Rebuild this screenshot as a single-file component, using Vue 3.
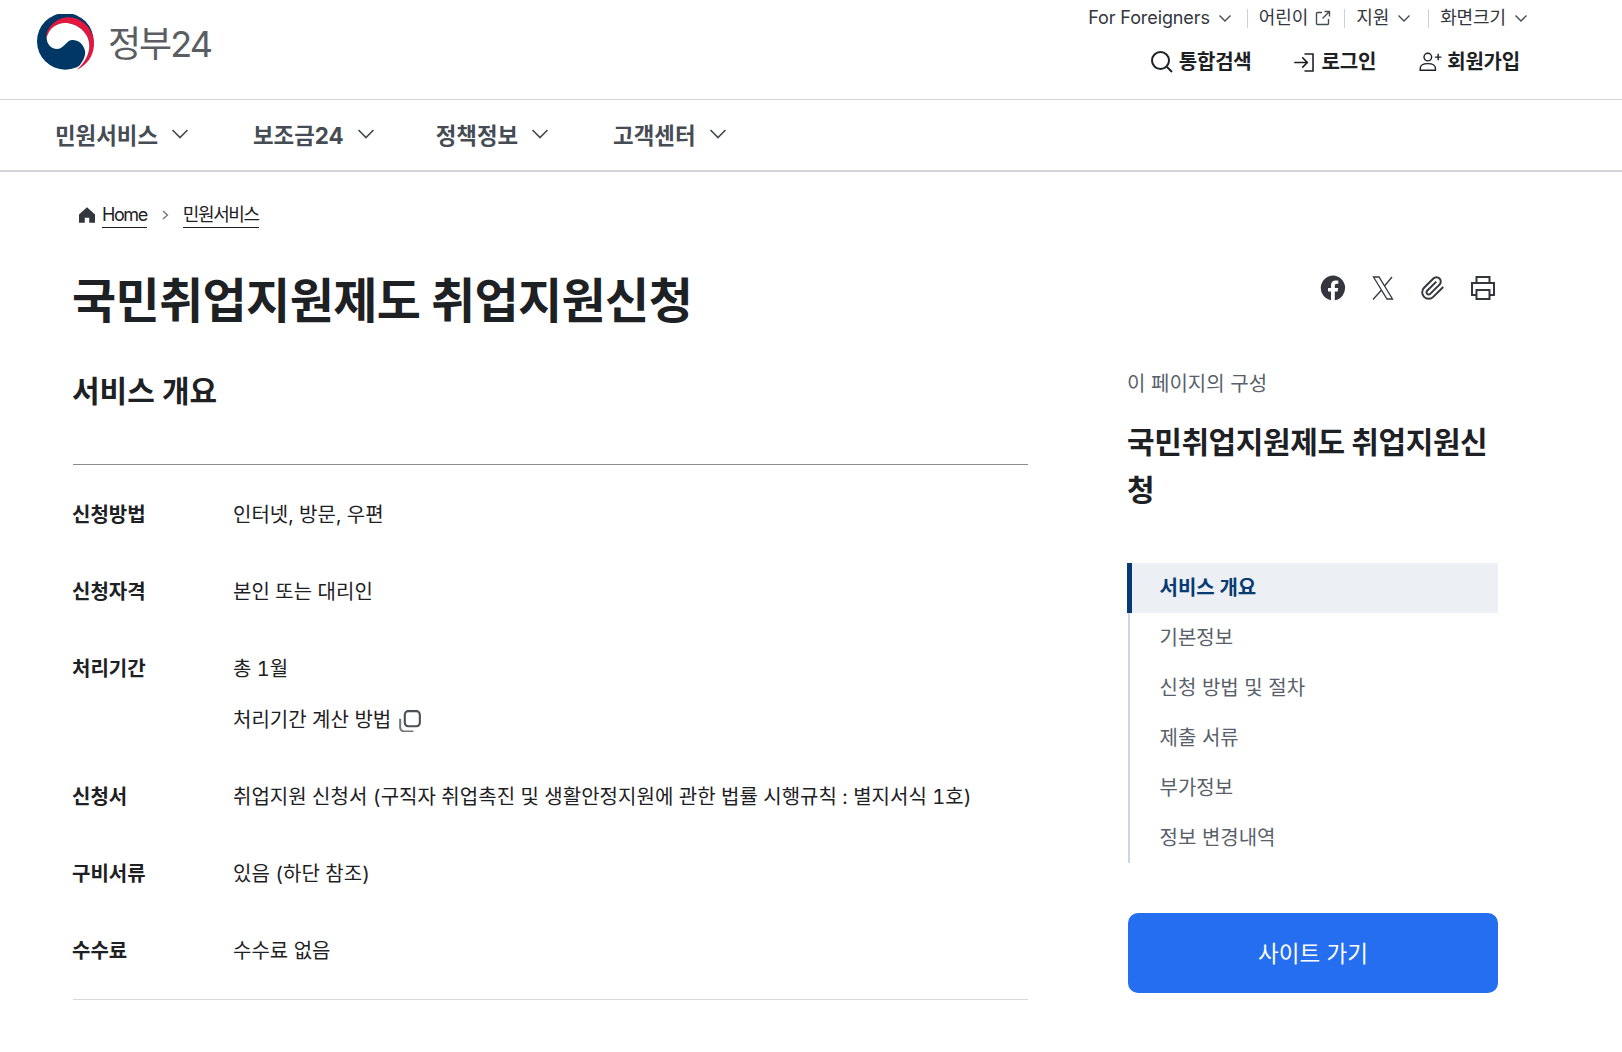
<script setup>
const gnb = ['민원서비스', '보조금24', '정책정보', '고객센터']
const toc = ['기본정보', '신청 방법 및 절차', '제출 서류', '부가정보', '정보 변경내역']
</script>

<template>
  <div class="page">
    <header class="header">
      <a class="logo">
        <svg width="60" height="57" viewBox="18 15 180 171">
          <circle cx="106" cy="97" r="85" fill="#003764" />
          <path d="M48 88C50 50 85 25 115 25C160 25 192 65 192 105C192 140 170 170 140 182C165 160 178 135 178 110C178 70 140 42 105 42C80 42 58 60 48 88Z" fill="#e4173e" />
          <path d="M50 85C58 58 80 42 105 42C140 42 178 70 178 110C178 135 165 160 142 180C155 160 168 145 165 125C160 105 145 93 128 93C108 93 105 118 82 120C62 120 50 105 50 85Z" fill="#fff" />
        </svg>
        <span class="logo-text">정부24</span>
      </a>
      <div class="header-right">
        <ul class="util">
          <li>For Foreigners <svg class="chev-s" viewBox="0 0 16 16"><path d="M2.500 5.500 8 11l5.500-5.500" /></svg></li>
          <li>어린이 <svg class="ext" viewBox="0 0 16 16"><path d="M7 2.500H2.500a1 1 0 0 0-1 1V13.500a1 1 0 0 0 1 1H12.500a1 1 0 0 0 1-1V9M9.500 1.500H14.500V6.500M14.500 1.500 7.500 8.500" /></svg></li>
          <li>지원 <svg class="chev-s" viewBox="0 0 16 16"><path d="M2.500 5.500 8 11l5.500-5.500" /></svg></li>
          <li>화면크기 <svg class="chev-s" viewBox="0 0 16 16"><path d="M2.500 5.500 8 11l5.500-5.500" /></svg></li>
        </ul>
        <div class="actions">
          <a class="act act-search">
            <svg width="24" height="24" viewBox="0 0 24 24" class="ic"><circle cx="10.500" cy="10.500" r="8.500" stroke-width="2" /><path d="m17 17 5 5" stroke-width="2" /></svg>
            통합검색
          </a>
          <a class="act act-login">
            <svg width="25" height="25" viewBox="0 0 22 22" class="ic"><path d="M11 3.500h7.500v15H11M2 11h11M9 6.500l4.500 4.500L9 15.500" stroke-width="1.400" /></svg>
            로그인
          </a>
          <a class="act act-join">
            <svg width="24" height="24" viewBox="0 0 22 22" class="ic"><circle cx="9" cy="6.500" r="3.500" stroke-width="1.300" /><path d="M2 18.500v-1.500c0-3 3-4.500 7-4.500s7 1.500 7 4.500v1.500ZM15.500 6.500h6M18.500 3.500v6" stroke-width="1.300" /></svg>
            회원가입
          </a>
        </div>
      </div>
    </header>

    <nav class="gnb">
      <a v-for="g in gnb" :key="g" class="gnb-item">
        {{ g }}
        <svg width="20" height="20" viewBox="0 0 20 20" class="ic"><path d="M2.500 6 10 13.500 17.500 6" stroke-width="1.700" /></svg>
      </a>
    </nav>

    <div class="crumbs">
      <svg width="16" height="16" viewBox="0.800 1 14.400 14"><path d="M8 1 .8 7.500V15H6v-4.500h4V15h5.200V7.500Z" fill="#33363d" /></svg>
      <a class="crumb">Home</a>
      <svg width="16" height="16" viewBox="0 0 16 16" class="ic"><path d="m6 4 4.500 4L6 12" stroke="#777" stroke-width="1.400" /></svg>
      <a class="crumb">민원서비스</a>
    </div>

    <div class="title-row">
      <h1 class="title">국민취업지원제도 취업지원신청</h1>
      <div class="share">
        <svg width="26" height="26" viewBox="0 0 26 26"><path d="M13 .5a12.500 12.500 0 0 0-2 24.800v-8.700H8V13h3v-2.700c0-3.100 1.800-4.800 4.600-4.800 1.300 0 2.700.2 2.700.2v3h-1.500c-1.500 0-2 .9-2 1.900V13h3.400l-.5 3.600h-2.900v8.700A12.500 12.500 0 0 0 13 .5Z" fill="#33363d" /></svg>
        <svg width="26" height="26" viewBox="0 0 26 26" class="ic"><path d="M3.500 2h5.500l13.500 22H17ZM22 2 14.500 11M11.500 15 3 24.500" stroke-width="1.300" /></svg>
        <svg width="26" height="26" viewBox="0 0 24 24" class="ic"><path d="m21.440 11.050-9.190 9.190a6 6 0 0 1-8.490-8.490l8.570-8.570A4 4 0 1 1 18 8.840l-8.590 8.570a2 2 0 0 1-2.830-2.830l8.490-8.480" stroke-width="1.800" /></svg>
        <svg width="26" height="26" viewBox="0 0 26 26" class="ic"><path d="M6.500 8V2h13v6M6.500 20H2V8h22v12h-4.500M6.500 15h13v9h-13Z" stroke-width="2" /></svg>
      </div>
    </div>

    <div class="content">
      <main class="main">
        <h2 class="h2">서비스 개요</h2>
        <dl class="info">
          <div class="row"><dt>신청방법</dt><dd>인터넷, 방문, 우편</dd></div>
          <div class="row"><dt>신청자격</dt><dd>본인 또는 대리인</dd></div>
          <div class="row">
            <dt>처리기간</dt>
            <dd>
              <div>총 1월</div>
              <div class="calc">처리기간 계산 방법
                <svg width="22" height="22" viewBox="1.500 1 19 19" class="ic"><rect x="6.500" y="2" width="13" height="13" rx="3" stroke="#4a4e55" stroke-width="1.800" /><path d="M2.500 8.500V16a3.500 3.500 0 0 0 3.500 3.500h8" stroke="#777" stroke-width="1.800" /></svg>
              </div>
            </dd>
          </div>
          <div class="row"><dt>신청서</dt><dd>취업지원 신청서 (구직자 취업촉진 및 생활안정지원에 관한 법률 시행규칙 : 별지서식 1호)</dd></div>
          <div class="row"><dt>구비서류</dt><dd>있음 (하단 참조)</dd></div>
          <div class="row"><dt>수수료</dt><dd>수수료 없음</dd></div>
        </dl>
      </main>
      <aside class="side">
        <p class="side-label">이 페이지의 구성</p>
        <h3 class="side-title">국민취업지원제도 취업지원신청</h3>
        <ul class="toc">
          <li class="on">서비스 개요</li>
          <li v-for="t in toc" :key="t">{{ t }}</li>
        </ul>
        <button class="go">사이트 가기</button>
      </aside>
    </div>
  </div>
</template>

<style>
html, body { margin: 0; background: #fff; }
</style>

<style scoped>
.page { font-family: Inter, "Noto Sans CJK KR", sans-serif; color: #1e2124; height: 1052px; overflow: hidden; }
.ic { fill: none; stroke: currentColor; }
.header { height: 99px; border-bottom: 1px solid #d2d4d8; display: flex; justify-content: space-between; padding: 0 96px 0 36px; }
.logo { display: flex; align-items: flex-start; padding-top: 14px; }
.logo-text { font-size: 36px; color: #5a5d61; margin-left: 12px; line-height: 56px; letter-spacing: -2px; padding-top: 2px; }
.header-right { display: flex; flex-direction: column; align-items: flex-end; }
.util { list-style: none; margin: 6px -16px 0 0; padding: 0; display: flex; font-size: 18px; line-height: 24px; color: #33363d; letter-spacing: -.1px; }
.util li { display: flex; align-items: center; gap: 7px; padding: 0 13px 0 12px; position: relative; }
.util li:first-child { padding-right: 14px; }
.util li:nth-child(3) { padding-right: 16px; }
.util li + li::before { content: ""; position: absolute; left: 0; top: 3px; height: 19px; width: 1px; background: #cdd1d5; }
.chev-s { width: 16px; height: 16px; fill: none; stroke: #464c53; stroke-width: 1.400; }
.ext { width: 16px; height: 16px; fill: none; stroke: #464c53; stroke-width: 1.400; }
.actions { display: flex; margin-top: 16px; font-size: 20px; font-weight: 700; color: #1e2124; padding-right: 6px; letter-spacing: -.2px; }
.act { display: flex; align-items: center; line-height: 32px; }
.act-search { gap: 5px; }
.act-login { margin-left: 40px; gap: 5px; }
.act-join { margin-left: 42px; gap: 5px; }
.gnb { height: 68px; padding-bottom: 2px; border-bottom: 2px solid #d2d4d8; display: flex; align-items: center; padding-left: 55px; font-size: 22.400px; font-weight: 700; color: #464c53; }
.gnb-item { display: flex; align-items: center; gap: 12px; margin-right: 63px; }
.gnb-item:nth-child(2) { margin-right: 60px; }
.crumbs { display: flex; align-items: center; gap: 5px; padding: 30px 0 0 79px; font-size: 18px; line-height: 24px; height: 26px; letter-spacing: -1.400px; }
.crumbs > svg:first-child { margin-right: 2px; }
.crumb { border-bottom: 1px solid #1e2124; color: #1e2124; }
.crumbs .ic { margin: 0 5px; color: #777; }
.title-row { display: flex; justify-content: space-between; margin-top: 37px; padding: 0 126px 0 73px; }
.title { margin: 0 0 0 -1px; font-size: 48px; line-height: 72px; font-weight: 700; letter-spacing: -.63px; color: #1e2124; }
.share { display: flex; gap: 24px; padding-top: 10px; color: #33363d; }
.content { display: flex; padding: 0 124px 0 73px; gap: 100px; margin-top: 30px; }
.main { width: 955px; flex: none; }
.h2 { margin: 0; font-size: 30px; line-height: 48px; font-weight: 700; padding-bottom: 49px; border-bottom: 1px solid #8a8d90; text-indent: -1px; }
.info { margin: 0; padding: 36px 0 33px; border-bottom: 1px solid #d6d9dc; }
.row { display: flex; font-size: 20px; line-height: 29px; padding-bottom: 48px; }
.row:last-child { padding-bottom: 0; }
dt { width: 161px; margin-left: -1px; flex: none; font-weight: 700; }
dd { margin: 0; color: #1e2124; font-variant-numeric: tabular-nums; letter-spacing: .03px; }
.calc { display: flex; align-items: center; gap: 8px; margin-top: 22px; }
.side { width: 370px; flex: none; margin-top: 2px; }
.side-label { margin: 0 0 0 -1px; font-size: 20px; line-height: 30px; color: #58616a; }
.side-title { margin: 19px 0 0 -1px; font-size: 30px; line-height: 48px; font-weight: 700; color: #1e2124; letter-spacing: -.4px; }
.toc { list-style: none; margin: 49px 0 0; padding: 0; border-left: 2px solid #cdd5e0; font-size: 20px; color: #58616a; }
.toc li { height: 50px; line-height: 50px; padding-left: 29.500px; }
.toc .on { background: #eceff4; color: #083b72; font-weight: 700; border-left: 5px solid #063a74; margin-left: -3px; padding-left: 27.500px; }
.go { display: block; width: 370px; height: 80px; margin-top: 50px; padding-bottom: 3px; border: 0; border-radius: 10px; background: #256ef0; color: #fff; font: 400 22.500px Inter, "Noto Sans CJK KR", sans-serif; }
</style>
